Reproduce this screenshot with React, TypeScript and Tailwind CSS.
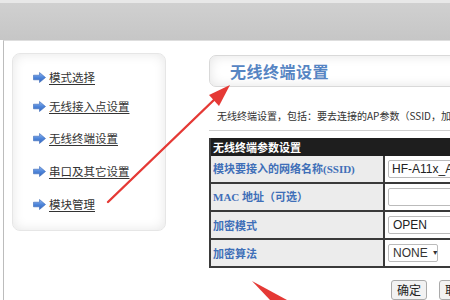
import React from "react";

const menu = [
  { label: "模式选择", mt: "mt-[15px]" },
  { label: "无线接入点设置", mt: "mt-[13px]" },
  { label: "无线终端设置", mt: "mt-[16px]" },
  { label: "串口及其它设置", mt: "mt-[17px]" },
  { label: "模块管理", mt: "mt-[17px]" },
];

function BlueArrow() {
  return (
    <svg width="13" height="11" viewBox="0 0 13 11" className="shrink-0">
      <defs>
        <linearGradient id="ba" x1="0" y1="0" x2="0" y2="1">
          <stop offset="0" stopColor="#8db3ee" />
          <stop offset="0.5" stopColor="#4f86da" />
          <stop offset="1" stopColor="#3566bd" />
        </linearGradient>
      </defs>
      <path d="M0.5 3.2 H6.5 V0.5 L12.5 5.5 L6.5 10.5 V7.8 H0.5 Z" fill="url(#ba)" stroke="#3a69b8" strokeWidth="0.6" />
    </svg>
  );
}

export default function App() {
  return (
    <div className="relative w-[450px] h-[300px] overflow-hidden bg-white font-['Noto_Sans_CJK_SC',sans-serif]">
      <div className="h-[40px] border-t-[3px] border-[#e8e8e8] bg-gradient-to-b from-[#d0d0d0] to-[#c6c6c6]" />
      <div className="flex ml-[3px] h-[260px] border-l border-t border-l-[#bcbcbc] border-t-[#dedede] pt-[12px] pl-[8px]">
        {/* sidebar */}
        <div className="w-[154px] h-[178px] shrink-0 rounded-[8px] bg-white border border-[#e6e6e6] shadow-[inset_0_0_12px_rgba(0,0,0,0.10)] flex flex-col pl-[20px]">
          {menu.map((m) => (
            <div key={m.label} className={`${m.mt} h-[16px] flex items-center gap-[3px]`}>
              <BlueArrow />
              <span className="text-[11.5px] leading-[16px] text-[#333] underline underline-offset-2">{m.label}</span>
            </div>
          ))}
        </div>

        {/* right column */}
        <div className="ml-[43px] w-[320px] shrink-0 flex flex-col">
          <div className="mt-[2px] h-[41px] rounded-l-[7px] border border-[#d9d9d9] bg-white shadow-[inset_0_0_12px_rgba(0,0,0,0.11)] flex items-center pl-[20px]">
            <span className="text-[16px] font-bold text-[#5685c3] tracking-[0.5px]">无线终端设置</span>
          </div>
          <div className="mt-[22px] pl-[8px] h-[14px] text-[10px] leading-[14px] text-[#333] whitespace-nowrap">
            无线终端设置，包括：要去连接的AP参数（SSID，加密方式等）
          </div>
          <div className="mt-[7px] h-px bg-[#cfcfcf]" />
          <div className="mt-[7px] bg-[#3a3a3a] px-[2px] pb-[2px] w-[300px]">
            <div className="h-[18px] flex items-center pl-[2px] text-[11px] font-bold text-white bg-[#1e1e1e]">
              无线终端参数设置
            </div>
            <div className="grid grid-cols-[172px_1fr] gap-[2px]">
              <div className="h-[26px] bg-[#ececec] flex items-center pl-[2px] text-[11px] font-bold text-[#3f6fb8] font-['Liberation_Serif','Noto_Sans_CJK_SC',serif]">
                模块要接入的网络名称(SSID)
              </div>
              <div className="h-[26px] bg-white flex items-center pl-[3px]">
                <div className="h-[18px] w-[120px] border border-[#bbbbbb] rounded-[2px] flex items-center pl-[3px] text-[12px] text-[#222] font-['Liberation_Sans',sans-serif]">
                  HF-A11x_AP
                </div>
              </div>
              <div className="h-[26px] bg-[#ececec] flex items-center pl-[2px] text-[11px] font-bold text-[#3f6fb8] font-['Liberation_Serif','Noto_Sans_CJK_SC',serif]">
                MAC 地址（可选）
              </div>
              <div className="h-[26px] bg-white flex items-center pl-[3px]">
                <div className="h-[18px] w-[120px] border border-[#bbbbbb] rounded-[2px]" />
              </div>
              <div className="h-[26px] bg-[#ececec] flex items-center pl-[2px] text-[11px] font-bold text-[#3f6fb8]">
                加密模式
              </div>
              <div className="h-[26px] bg-white flex items-center pl-[3px]">
                <div className="h-[18px] w-[120px] border border-[#bbbbbb] rounded-[2px] flex items-center pl-[4px] text-[12px] text-[#222] font-['Liberation_Sans',sans-serif]">
                  OPEN
                </div>
              </div>
              <div className="h-[26px] bg-[#ececec] flex items-center pl-[2px] text-[11px] font-bold text-[#3f6fb8]">
                加密算法
              </div>
              <div className="h-[26px] bg-white flex items-center pl-[3px]">
                <div className="h-[18px] w-[50px] border border-[#bbbbbb] rounded-[2px] flex items-center pl-[4px] gap-[4px] text-[12px] text-[#333] font-['Liberation_Sans',sans-serif]">
                  NONE<span className="text-[7px]">▼</span>
                </div>
              </div>
            </div>
          </div>
          <div className="mt-[12px] pl-[182px] flex gap-[12px]">
            <div className="h-[20px] px-[5px] bg-[#f2f2f2] border border-[#aaaaaa] rounded-[3px] text-[12px] leading-[18px] text-[#222]">确定</div>
            <div className="h-[20px] px-[5px] bg-[#f2f2f2] border border-[#aaaaaa] rounded-[3px] text-[12px] leading-[18px] text-[#222]">取消</div>
          </div>
        </div>
      </div>

      {/* red annotation arrows */}
      <svg className="absolute inset-0 pointer-events-none" width="450" height="300" viewBox="0 0 450 300">
        <line x1="108" y1="202" x2="217" y2="97" stroke="#e53935" strokeWidth="2.4" strokeLinecap="round" />
        <polygon points="230,85 209,95 219,106" fill="#e53935" />
        <polygon points="252,281 287,300 270,300" fill="#e53935" />
      </svg>
    </div>
  );
}
